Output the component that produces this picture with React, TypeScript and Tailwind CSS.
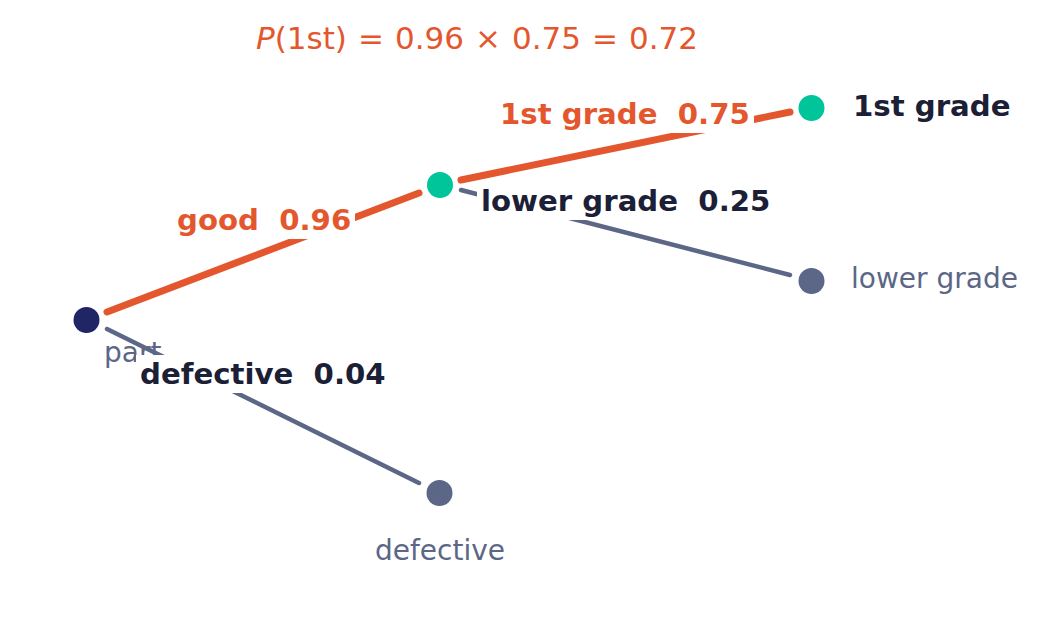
import React from 'react';

const ORANGE = '#e4572e';
const SLATE = '#5c6787';

type Edge = { x1: number; y1: number; x2: number; y2: number; hot: boolean };

const edges: Edge[] = [
  { x1: 107, y1: 312, x2: 419, y2: 193, hot: true },
  { x1: 461, y1: 180, x2: 790, y2: 112, hot: true },
  { x1: 107, y1: 329, x2: 419, y2: 483, hot: false },
  { x1: 461, y1: 190, x2: 790, y2: 275, hot: false },
];

const nodes = [
  { x: 86.5, y: 320, fill: '#1f2565' },
  { x: 440, y: 185, fill: '#00c49a' },
  { x: 811.5, y: 108, fill: '#00c49a' },
  { x: 811.5, y: 281, fill: SLATE },
  { x: 439.5, y: 493, fill: SLATE },
];

const Op = ({ children }: { children: React.ReactNode }) => <span className="mx-[11px]">{children}</span>;

export default function App() {
  return (
    <div className="relative w-[1047px] h-[640px] bg-white overflow-hidden font-['DejaVu_Sans',sans-serif]">
      {/* title */}
      <div className="absolute left-[256px] top-[20px] text-[31px] leading-[36px] text-[#e4572e] whitespace-pre">
        <span className="italic">P</span>(1st)<Op>=</Op>0.96<Op>×</Op>0.75<Op>=</Op>0.72
      </div>

      {/* root label sits under the lines */}
      <div className="absolute left-[104px] top-[336px] text-[28px] leading-[33px] text-[#5c6787]">part</div>

      <svg className="absolute inset-0" width="1047" height="640" viewBox="0 0 1047 640">
        {edges.map((e, i) => (
          <line
            key={i}
            x1={e.x1}
            y1={e.y1}
            x2={e.x2}
            y2={e.y2}
            stroke={e.hot ? ORANGE : SLATE}
            strokeWidth={e.hot ? 7 : 4.5}
            strokeLinecap="round"
          />
        ))}
        {nodes.map((n, i) => (
          <circle key={i} cx={n.x} cy={n.y} r={13} fill={n.fill} />
        ))}
      </svg>

      {/* edge labels */}
      <div className="absolute left-[173px] top-[201px] px-1 py-[2px] bg-white text-[29.2px] leading-[34px] font-bold text-[#e4572e] whitespace-pre">
        good  0.96
      </div>
      <div className="absolute left-[496px] top-[95px] px-1 py-[2px] bg-white text-[29.2px] leading-[34px] font-bold text-[#e4572e] whitespace-pre">
        1st grade  0.75
      </div>
      <div className="absolute left-[477px] top-[182px] px-1 py-[2px] bg-white text-[29.2px] leading-[34px] font-bold text-[#1b2036] whitespace-pre">
        lower grade  0.25
      </div>
      <div className="absolute left-[136px] top-[355px] px-1 py-[2px] bg-white text-[29.2px] leading-[34px] font-bold text-[#1b2036] whitespace-pre">
        defective  0.04
      </div>

      {/* leaf labels */}
      <div className="absolute left-[853px] top-[89px] text-[29.2px] leading-[34px] font-bold text-[#1b2036]">1st grade</div>
      <div className="absolute left-[851px] top-[262px] text-[28px] leading-[33px] text-[#5c6787]">lower grade</div>
      <div className="absolute left-[440px] top-[534px] -translate-x-1/2 text-[28px] leading-[33px] text-[#5c6787]">defective</div>
    </div>
  );
}
